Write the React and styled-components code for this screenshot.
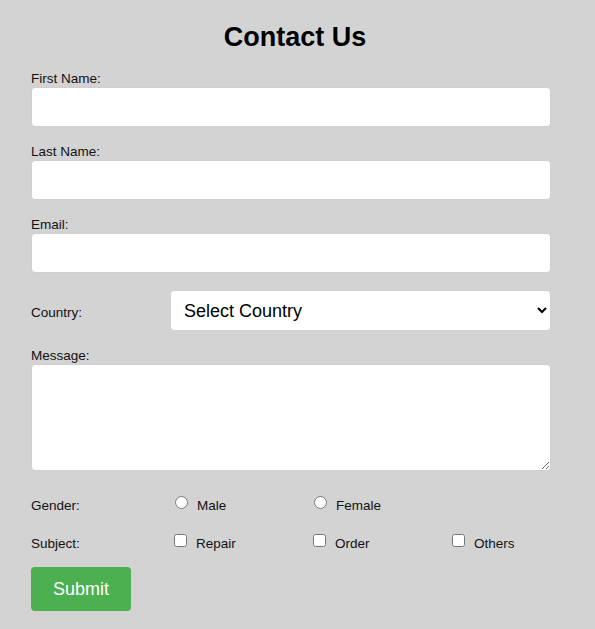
import React from "react";
import styled, { createGlobalStyle } from "styled-components";

const GlobalStyle = createGlobalStyle`
  html, body {
    margin: 0;
    padding: 0;
    background: #d3d3d3;
  }
  body {
    font-family: "Liberation Sans", Arial, sans-serif;
    color: #111;
  }
  * {
    box-sizing: border-box;
  }
`;

const Page = styled.div`
  padding: 22px 44px 16px 31px;
  min-height: 629px;
`;

const Title = styled.h1`
  margin: 0 0 18px;
  padding-left: 8px;
  font-size: 27px;
  line-height: 31px;
  font-weight: bold;
  text-align: center;
  color: #000;
`;

const Form = styled.form`
  display: flex;
  flex-direction: column;
`;

const Field = styled.div`
  display: flex;
  flex-direction: column;
  margin-bottom: ${(p) => p.$space || 17}px;
`;

const Label = styled.label`
  display: block;
  font-size: 13.5px;
  line-height: 16px;
`;

const TextInput = styled.input`
  display: block;
  width: 100%;
  height: 40px;
  padding: 0 10px;
  border: 1px solid #cfcfcf;
  border-radius: 4px;
  background: #fff;
  font-family: inherit;
  font-size: 16px;
`;

const InlineRow = styled.div`
  display: grid;
  grid-template-columns: 139px 1fr;
  align-items: baseline;
  margin-bottom: 17px;
`;

const Select = styled.select`
  width: 100%;
  height: 41px;
  padding: 0 9px;
  border: 1px solid #cfcfcf;
  border-radius: 4px;
  background: #fff;
  color: #000;
  font-family: inherit;
  font-size: 18px;
`;

const TextArea = styled.textarea`
  display: block;
  width: 100%;
  height: 107px;
  padding: 8px 10px;
  border: 1px solid #cfcfcf;
  border-radius: 4px;
  background: #fff;
  font-family: inherit;
  font-size: 14px;
`;

const OptionGroup = styled.div`
  display: flex;
  flex-direction: column;
  gap: 20px;
  margin-bottom: 15px;
`;

const OptionRow = styled.div`
  display: grid;
  grid-template-columns: 139px 139px 139px 1fr;
  align-items: baseline;
  font-size: 13.5px;
  line-height: 16px;
`;

const Option = styled.label`
  display: block;
  white-space: nowrap;
`;

const Choice = styled.input`
  width: 13px;
  height: 13px;
  margin: 0 9px 0 ${(p) => (p.type === "radio" ? 5 : 4)}px;
  vertical-align: 1px;
`;

const SubmitButton = styled.button`
  align-self: flex-start;
  padding: 12px 22px;
  border: none;
  border-radius: 4px;
  background: #4caf50;
  color: #fff;
  font-family: inherit;
  font-size: 18px;
  line-height: 20px;
  cursor: pointer;
`;

export default function App() {
  return (
    <Page>
      <GlobalStyle />
      <Title>Contact Us</Title>
      <Form onSubmit={(e) => e.preventDefault()}>
        <Field>
          <Label htmlFor="first">First Name:</Label>
          <TextInput id="first" type="text" />
        </Field>
        <Field>
          <Label htmlFor="last">Last Name:</Label>
          <TextInput id="last" type="text" />
        </Field>
        <Field>
          <Label htmlFor="email">Email:</Label>
          <TextInput id="email" type="email" />
        </Field>
        <InlineRow>
          <Label htmlFor="country">Country:</Label>
          <Select id="country" defaultValue="">
            <option value="">Select Country</option>
            <option value="us">United States</option>
            <option value="uk">United Kingdom</option>
            <option value="in">India</option>
          </Select>
        </InlineRow>
        <Field $space={25}>
          <Label htmlFor="message">Message:</Label>
          <TextArea id="message" />
        </Field>
        <OptionGroup>
          <OptionRow>
            <Label as="span">Gender:</Label>
            <Option>
              <Choice type="radio" name="gender" value="male" />
              Male
            </Option>
            <Option>
              <Choice type="radio" name="gender" value="female" />
              Female
            </Option>
          </OptionRow>
          <OptionRow>
            <Label as="span">Subject:</Label>
            <Option>
              <Choice type="checkbox" value="repair" />
              Repair
            </Option>
            <Option>
              <Choice type="checkbox" value="order" />
              Order
            </Option>
            <Option>
              <Choice type="checkbox" value="others" />
              Others
            </Option>
          </OptionRow>
        </OptionGroup>
        <SubmitButton type="submit">Submit</SubmitButton>
      </Form>
    </Page>
  );
}
